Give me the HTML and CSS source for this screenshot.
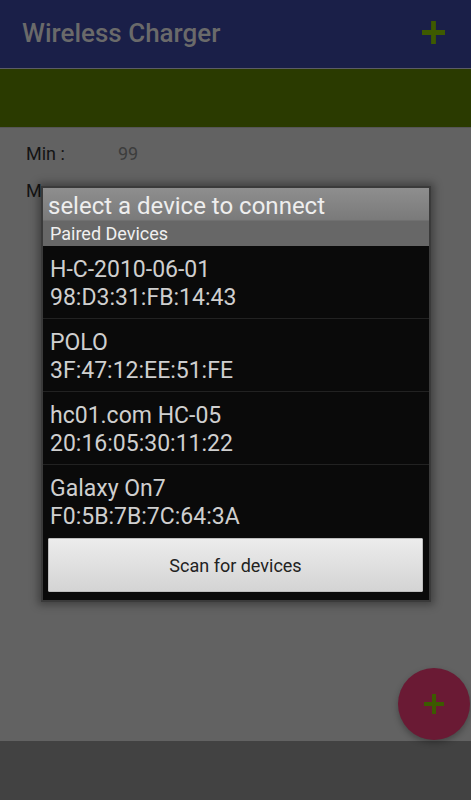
FILE: index.html
```html
<!DOCTYPE html>
<html>
<head>
<meta charset="utf-8">
<link rel="stylesheet" href="styles.css">
</head>
<body>
<div class="screen">
  <header class="appbar">
    <span class="title">Wireless Charger</span>
    <svg class="add-icon" width="24" height="24" viewBox="0 0 24 24"><path d="M9.5 0h5v9.5H24v5h-9.5V24h-5v-9.5H0v-5h9.5z" fill="#3e5a00"/></svg>
  </header>
  <div class="band"></div>
  <main class="content">
    <div class="row"><span class="label">Min :</span><span class="value">99</span></div>
    <div class="row"><span class="label">Max :</span></div>
  </main>
  <footer class="bottombar"></footer>

  <button class="fab" aria-label="add">
    <svg width="20" height="20" viewBox="0 0 20 20"><path d="M8 0h4v8h8v4h-8v8H8v-8H0V8h8z" fill="#3c5a00"/></svg>
  </button>

  <div class="dialog">
    <div class="dialog-title">select a device to connect</div>
    <div class="section">Paired Devices</div>
    <ul class="devices">
      <li><div>H-C-2010-06-01</div><div>98:D3:31:FB:14:43</div></li>
      <li><div>POLO</div><div>3F:47:12:EE:51:FE</div></li>
      <li><div>hc01.com HC-05</div><div>20:16:05:30:11:22</div></li>
      <li><div>Galaxy On7</div><div>F0:5B:7B:7C:64:3A</div></li>
    </ul>
    <div class="actions"><button class="scan">Scan for devices</button></div>
  </div>
</div>
</body>
</html>
```
FILE: styles.css
```css
* { box-sizing: border-box; }
html, body { margin: 0; padding: 0; }
body {
  font-family: Roboto, "Noto Sans", "Liberation Sans", sans-serif;
  background: #626262;
}
.screen {
  position: relative;
  width: 471px;
  height: 800px;
  display: flex;
  flex-direction: column;
  overflow: hidden;
}
.appbar {
  height: 69px;
  flex: none;
  background: #1a1f48;
  border-bottom: 1px solid #5c5c66;
  display: flex;
  align-items: center;
  justify-content: space-between;
  padding: 0 26px 0 22px;
}
.title {
  color: #6a6a6a;
  font-size: 26px;
  font-weight: 500;
  margin-top: -2px;
}
.add-icon { width: 23px; height: 23px; margin-top: -3px; }
.band {
  height: 59px;
  flex: none;
  background: #2a3a00;
  border-bottom: 1px solid #555;
}
.content {
  flex: 1;
  background: #626262;
  padding: 15px 26px 0;
  display: flex;
  flex-direction: column;
  gap: 15px;
}
.row {
  display: flex;
  font-size: 18px;
  line-height: 22px;
}
.label { color: #141414; width: 92px; }
.value { color: #3c3c3c; }
.bottombar {
  height: 59px;
  flex: none;
  background: #424242;
}
.fab {
  position: absolute;
  left: 398px;
  top: 668px;
  width: 72px;
  height: 72px;
  border-radius: 50%;
  border: none;
  background: #6a1a34;
  box-shadow: 0 3px 6px rgba(0,0,0,0.3);
  display: flex;
  align-items: center;
  justify-content: center;
  padding: 0;
}
.dialog {
  position: absolute;
  left: 41px;
  top: 186px;
  width: 390px;
  height: 416px;
  border: 2px solid #3a3a3a;
  background: #0a0a0a;
  box-shadow: 0 0 8px 3px rgba(0,0,0,0.35);
  display: flex;
  flex-direction: column;
}
.dialog-title {
  height: 32px;
  flex: none;
  background: linear-gradient(#8e8e8e, #7a7a7a);
  color: #eeeeee;
  font-size: 24px;
  line-height: 37px;
  padding-left: 5px;
  overflow: hidden;
  white-space: nowrap;
}
.section {
  height: 26px;
  flex: none;
  background: #676767;
  border-top: 1px solid #707070;
  color: #f0f0f0;
  font-size: 18px;
  line-height: 25px;
  padding-left: 7px;
}
.devices {
  list-style: none;
  margin: 0;
  padding: 0;
}
.devices li {
  height: 73px;
  padding: 10px 7px 0;
  border-bottom: 1px solid #222;
  color: #cfcfcf;
  font-size: 23px;
  line-height: 28px;
  white-space: nowrap;
}
.devices li:last-child { border-bottom: none; height: 72px; }
.actions {
  padding: 1px 6px 0 5px;
}
.scan {
  width: 100%;
  height: 54px;
  border: 1px solid #bdbdbd;
  border-radius: 1px;
  background: linear-gradient(#ececec, #d4d4d4);
  color: #222;
  font-family: Roboto, "Noto Sans", "Liberation Sans", sans-serif;
  font-size: 18px;
  padding: 0;
}
```
